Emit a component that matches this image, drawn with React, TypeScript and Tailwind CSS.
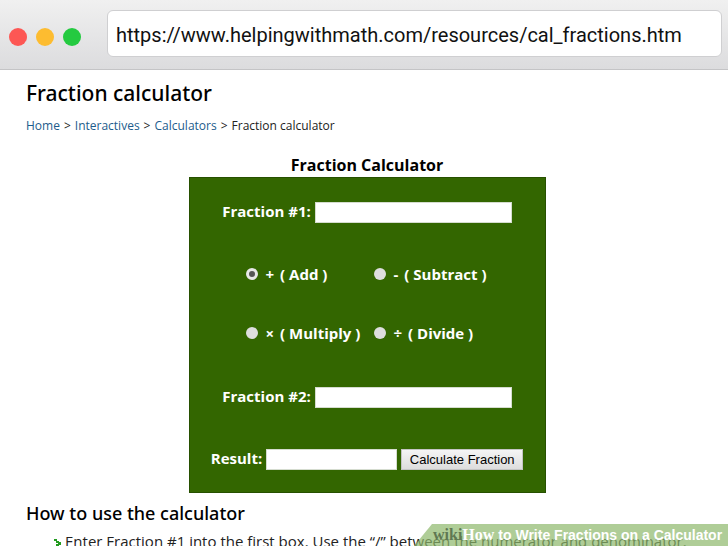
import { useState } from 'react';

const operations = [
  { id: 'add', symbol: '+', name: 'Add' },
  { id: 'subtract', symbol: '-', name: 'Subtract' },
  { id: 'multiply', symbol: '×', name: 'Multiply' },
  { id: 'divide', symbol: '÷', name: 'Divide' },
];

function BrowserBar() {
  return (
    <header className="flex h-[70px] items-center gap-[26px] border-b border-[#c4c4c6] bg-linear-to-b from-[#f0f0f0] to-[#dcdcde] pr-1.5 pl-[9px]">
      <div className="flex shrink-0 gap-[9px] pt-1">
        <span className="size-[18px] rounded-full bg-[#fd5754]" />
        <span className="size-[18px] rounded-full bg-[#fdbc30]" />
        <span className="size-[18px] rounded-full bg-[#24ca40]" />
      </div>
      <input
        type="text"
        aria-label="Address"
        defaultValue="https://www.helpingwithmath.com/resources/cal_fractions.htm"
        className="mt-[-3px] h-[47px] min-w-0 flex-1 rounded-md border border-[#cfcfd1] bg-white px-2 pt-1 font-['Roboto',sans-serif] text-xl text-[#111]"
      />
    </header>
  );
}

function FractionField({ id, label }: { id: string; label: string }) {
  return (
    <div className="flex items-start justify-center gap-1">
      <label htmlFor={id}>{label}</label>
      <input id={id} type="text" className="h-[21px] w-[197px] border border-[#d5dccf] bg-white px-1 text-black" />
    </div>
  );
}

function Calculator() {
  const [operation, setOperation] = useState('add');
  return (
    <section className="mt-[19px] ml-1.5 flex flex-col items-center">
      <h2 className="text-center text-base leading-6 font-bold text-black">Fraction Calculator</h2>
      <form
        onSubmit={(event) => event.preventDefault()}
        className="flex h-[316px] w-[357px] flex-col border border-[#275000] bg-[#336600] pt-6 text-[15px] leading-[18px] font-bold text-white"
      >
        <FractionField id="fraction-1" label="Fraction #1:" />
        <div className="mt-[42px] ml-14 grid grid-cols-[128px_auto] justify-start gap-y-[41px]">
          {operations.map(({ id, symbol, name }) => (
            <label key={id} className="flex items-center gap-2 whitespace-nowrap">
              <input
                type="radio"
                name="operation"
                value={id}
                checked={operation === id}
                onChange={() => setOperation(id)}
                className="size-3 shrink-0 appearance-none rounded-full bg-[#dedede] checked:border-3 checked:border-[#e8e8e8] checked:bg-[#555]"
              />
              <span className="flex gap-1.5">
                <span>{symbol}</span>
                <span>( {name} )</span>
              </span>
            </label>
          ))}
        </div>
        <div className="mt-[45px]">
          <FractionField id="fraction-2" label="Fraction #2:" />
        </div>
        <div className="mt-[41px] flex items-start justify-center gap-1">
          <label htmlFor="result">Result:</label>
          <input id="result" type="text" className="h-[21px] w-[131px] border border-[#d5dccf] bg-white px-1 text-black" />
          <button
            type="submit"
            className="h-[21px] w-[122px] border border-[#c4c4c4] bg-linear-to-b from-[#f5f5f5] to-[#dddddd] font-['Liberation_Sans',sans-serif] text-[13px] leading-[18px] font-normal whitespace-nowrap text-black"
          >
            Calculate Fraction
          </button>
        </div>
      </form>
    </section>
  );
}

export default function App() {
  return (
    <div className="relative h-screen overflow-hidden bg-white font-['Open_Sans','Noto_Sans',sans-serif] text-black">
      <BrowserBar />
      <main className="px-[26px] pt-2">
        <h1 className="font-['Noto_Sans',sans-serif] text-[21px] leading-[30px] font-medium">Fraction calculator</h1>
        <nav aria-label="Breadcrumb" className="mt-2.5 flex gap-1 text-xs leading-4 text-[#222]">
          <a href="#home" className="text-[#1d5c8c]">Home</a>
          <span>&gt;</span>
          <a href="#interactives" className="text-[#1d5c8c]">Interactives</a>
          <span>&gt;</span>
          <a href="#calculators" className="text-[#1d5c8c]">Calculators</a>
          <span>&gt;</span>
          <span>Fraction calculator</span>
        </nav>
        <Calculator />
        <h2 className="mt-1.5 font-['Noto_Sans',sans-serif] text-lg leading-7 font-medium">How to use the calculator</h2>
        <ul className="mt-1 pl-7 text-[15px] leading-5 text-[#222]">
          <li className="flex gap-1 whitespace-nowrap">
            <svg aria-hidden="true" viewBox="0 0 7 9" className="mt-2 h-[9px] w-[7px] shrink-0" fill="#239b20">
              <path d="M0 0h3v2H0zM2 2h3v2H2zM4 3h3v3H4zM2 5h3v2H2zM0 7h3v2H0z" />
            </svg>
            Enter Fraction #1 into the first box. Use the “/” between the numerator and denominator.
          </li>
        </ul>
      </main>
      <footer className="absolute right-0 bottom-0 flex h-[22px] w-[314px] items-center bg-[#8db86b]/70 pl-[19px] text-base leading-5 whitespace-nowrap text-white [clip-path:polygon(18px_0,100%_0,100%_100%,0_100%)]">
        <span className="font-['Liberation_Serif',serif] font-bold text-[#5f7852]">wiki</span>
        <span className="mr-1 font-['Liberation_Serif',serif] font-bold">How</span>
        <span className="font-['Liberation_Sans',sans-serif] text-sm font-bold">to Write Fractions on a Calculator</span>
      </footer>
    </div>
  );
}
